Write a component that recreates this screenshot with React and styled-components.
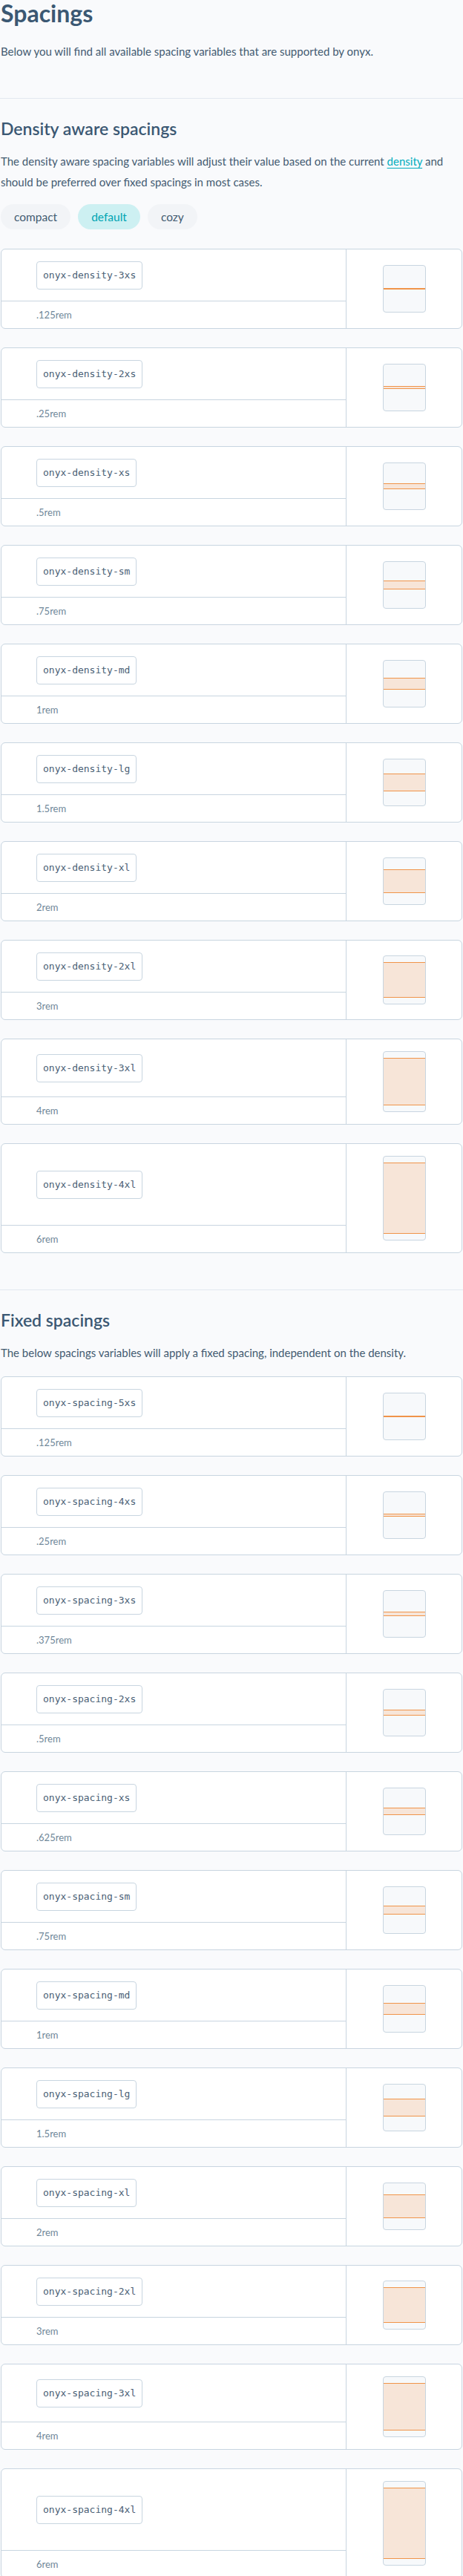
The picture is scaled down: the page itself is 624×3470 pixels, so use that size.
import React from "react";
import styled, { createGlobalStyle } from "styled-components";

const GlobalStyle = createGlobalStyle`
  html, body { margin: 0; padding: 0; background: #f9fafc; }
  body { font-family: Lato, "Noto Sans", sans-serif; color: #3e566c; }
  * { box-sizing: border-box; }
`;

const Page = styled.div`
  padding: 0 1px;
  background: #f9fafc;
`;

const Header = styled.header`
  padding: 0 0 49px;
`;

const Title = styled.h1`
  margin: 0;
  font-size: 32px;
  line-height: 36px;
  font-weight: 700;
  color: #3b5873;
`;

const Lead = styled.p`
  margin: 19px 0 0;
  font-size: 15px;
  line-height: 28px;
  color: #435b71;
`;

const Section = styled.section`
  border-top: 1px solid #e2e8f0;
  margin: 0 -1px;
  padding: 25px 1px 49px;
  &:last-child { padding-bottom: 0; }
`;

const SectionTitle = styled.h2`
  margin: 0;
  font-size: 23px;
  line-height: 30px;
  font-weight: 600;
  color: #3b5873;
`;

const Text = styled.p`
  margin: 15px 0 ${(p) => p.$after}px;
  font-size: 15px;
  line-height: 28px;
  color: #435b71;
`;

const Link = styled.a`
  color: #00adbd;
  text-decoration: underline;
  text-underline-offset: 3px;
`;

const Chips = styled.div`
  display: flex;
  gap: 10px;
  margin-bottom: 26px;
`;

const Chip = styled.span`
  display: inline-flex;
  align-items: center;
  height: 34px;
  padding: 0 18px;
  border-radius: 17px;
  font-size: 15.5px;
  background: ${(p) => (p.$active ? "#cdf0f2" : "#f2f4f7")};
  color: ${(p) => (p.$active ? "#00a5b3" : "#435b71")};
`;

const CardList = styled.div`
  display: flex;
  flex-direction: column;
  gap: 25px;
`;

const Card = styled.div`
  display: grid;
  grid-template-columns: 3fr 1fr;
  background: #fff;
  border: 1px solid #c8d5e0;
  border-radius: 6px;
  overflow: hidden;
`;

const InfoCol = styled.div`
  display: flex;
  flex-direction: column;
  border-right: 1px solid #c8d5e0;
`;

const NameRow = styled.div`
  flex: 1;
  min-height: 70px;
  display: flex;
  align-items: center;
  padding-left: 47px;
  border-bottom: 1px solid #c8d5e0;
`;

const NameBox = styled.code`
  display: inline-block;
  height: 38px;
  line-height: 36px;
  padding: 0 8px;
  border: 1px solid #c8d5e0;
  border-radius: 4px;
  font-family: "DejaVu Sans Mono", "Liberation Mono", monospace;
  font-size: 13px;
  color: #4a6075;
`;

const ValueRow = styled.div`
  height: 36px;
  line-height: 36px;
  padding-left: 47px;
  font-size: 13px;
  color: #6f8799;
`;

const PreviewCol = styled.div`
  display: flex;
  align-items: center;
  justify-content: center;
  padding: 16px 0;
`;

const PreviewBox = styled.div`
  width: 58px;
  min-height: 64px;
  padding: 8px 0;
  display: flex;
  flex-direction: column;
  justify-content: center;
  background: #f7f9fb;
  border: 1px solid #c8d5e0;
  border-radius: 4px;
`;

const Spacer = styled.div`
  flex: none;
  border-top: 1px solid #f09449;
  border-bottom: 1px solid #f09449;
  background: #f7e5d8;
`;

const density = [
  ["3xs", ".125rem", 0.125],
  ["2xs", ".25rem", 0.25],
  ["xs", ".5rem", 0.5],
  ["sm", ".75rem", 0.75],
  ["md", "1rem", 1],
  ["lg", "1.5rem", 1.5],
  ["xl", "2rem", 2],
  ["2xl", "3rem", 3],
  ["3xl", "4rem", 4],
  ["4xl", "6rem", 6],
];

const fixed = [
  ["5xs", ".125rem", 0.125],
  ["4xs", ".25rem", 0.25],
  ["3xs", ".375rem", 0.375],
  ["2xs", ".5rem", 0.5],
  ["xs", ".625rem", 0.625],
  ["sm", ".75rem", 0.75],
  ["md", "1rem", 1],
  ["lg", "1.5rem", 1.5],
  ["xl", "2rem", 2],
  ["2xl", "3rem", 3],
  ["3xl", "4rem", 4],
  ["4xl", "6rem", 6],
];

function SpacingCard({ name, label, rem }) {
  return (
    <Card>
      <InfoCol>
        <NameRow>
          <NameBox>{name}</NameBox>
        </NameRow>
        <ValueRow>{label}</ValueRow>
      </InfoCol>
      <PreviewCol>
        <PreviewBox>
          <Spacer style={{ height: `${rem * 16}px` }} />
        </PreviewBox>
      </PreviewCol>
    </Card>
  );
}

export default function App() {
  return (
    <Page>
      <GlobalStyle />
      <Header>
        <Title>Spacings</Title>
        <Lead>Below you will find all available spacing variables that are supported by onyx.</Lead>
      </Header>
      <Section>
        <SectionTitle>Density aware spacings</SectionTitle>
        <Text $after={16}>
          The density aware spacing variables will adjust their value based on the current{" "}
          <Link href="#density">density</Link> and should be preferred over fixed spacings in most cases.
        </Text>
        <Chips>
          <Chip>compact</Chip>
          <Chip $active>default</Chip>
          <Chip>cozy</Chip>
        </Chips>
        <CardList>
          {density.map(([k, label, rem]) => (
            <SpacingCard key={k} name={`onyx-density-${k}`} label={label} rem={rem} />
          ))}
        </CardList>
      </Section>
      <Section>
        <SectionTitle>Fixed spacings</SectionTitle>
        <Text $after={18}>
          The below spacings variables will apply a fixed spacing, independent on the density.
        </Text>
        <CardList>
          {fixed.map(([k, label, rem]) => (
            <SpacingCard key={k} name={`onyx-spacing-${k}`} label={label} rem={rem} />
          ))}
        </CardList>
      </Section>
    </Page>
  );
}
